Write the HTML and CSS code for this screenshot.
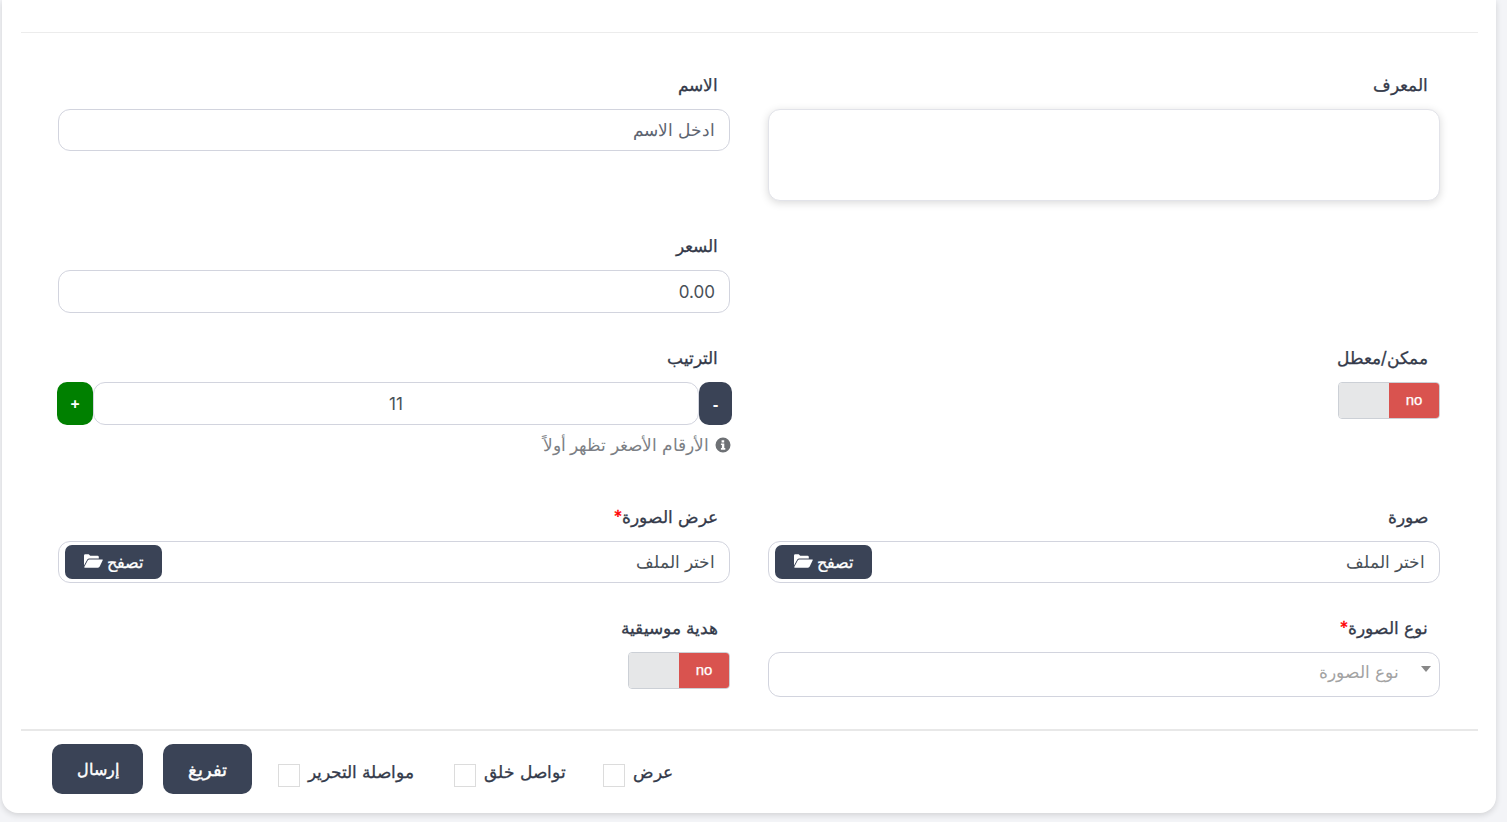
FILE: index.html
```html
<!DOCTYPE html>
<html lang="ar" dir="rtl">
<head>
<meta charset="utf-8">
<title>نموذج</title>
<link rel="stylesheet" href="styles.css">
</head>
<body>
<main class="card">
  <hr class="top-rule">
  <form class="form">
    <div class="grid">
      <div class="field row-1">
        <label class="label">المعرف</label>
        <textarea class="control textarea"></textarea>
      </div>
      <div class="field row-1">
        <label class="label">الاسم</label>
        <input class="control" type="text" placeholder="ادخل الاسم">
      </div>

      <div class="field row-2"></div>
      <div class="field row-2">
        <label class="label">السعر</label>
        <input class="control control-tall" type="text" value="0.00">
      </div>

      <div class="field row-3">
        <label class="label">ممكن/معطل</label>
        <div class="toggle"><span class="toggle-no">no</span><span class="toggle-off"></span></div>
      </div>
      <div class="field row-3">
        <label class="label">الترتيب</label>
        <div class="stepper">
          <button type="button" class="step step-minus">-</button>
          <input class="control control-tall step-input" type="text" value="11">
          <button type="button" class="step step-plus">+</button>
        </div>
        <p class="help">
          <svg class="info" viewBox="0 0 16 16"><path fill-rule="evenodd" d="M8 .5a7.5 7.5 0 1 0 0 15 7.5 7.5 0 0 0 0-15zM6.6 3.2h2.600v2.200H6.600zM5.900 6.500h3.400v4.600h1v1.600H5.900v-1.600h1V8.100h-1z"/></svg>
          الأرقام الأصغر تظهر أولاً
        </p>
      </div>

      <div class="field row-4">
        <label class="label label-tight">صورة</label>
        <div class="file"><span class="file-text">اختر الملف</span>
          <button type="button" class="browse">تصفح
            <svg class="folder" viewBox="0 0 19 14"><path d="M0 11.500V1.500Q0 .2 1.300 .2h3.400L6.200 1.700h7.300q1.300 0 1.300 1.300v1.400H5.200q-1.200 0-1.900 1.100z"/><path d="M5.300 5.400H18.300q.8 0 .4 .9l-3 6.300q-.5 1.100-1.700 1.100H.8q-.8 0-.4-.9l3.300-6.300q.6-1.100 1.600-1.100z"/></svg>
          </button>
        </div>
      </div>
      <div class="field row-4">
        <label class="label label-tight">عرض الصورة<span class="req">*</span></label>
        <div class="file"><span class="file-text">اختر الملف</span>
          <button type="button" class="browse">تصفح
            <svg class="folder" viewBox="0 0 19 14"><path d="M0 11.500V1.500Q0 .2 1.300 .2h3.400L6.200 1.700h7.300q1.300 0 1.300 1.300v1.400H5.200q-1.200 0-1.900 1.100z"/><path d="M5.300 5.400H18.300q.8 0 .4 .9l-3 6.300q-.5 1.100-1.700 1.100H.8q-.8 0-.4-.9l3.300-6.300q.6-1.100 1.600-1.100z"/></svg>
          </button>
        </div>
      </div>

      <div class="field row-5">
        <label class="label">نوع الصورة<span class="req">*</span></label>
        <div class="select"><span class="caret"></span><span class="select-text">نوع الصورة</span></div>
      </div>
      <div class="field row-5">
        <label class="label">هدية موسيقية</label>
        <div class="toggle"><span class="toggle-no">no</span><span class="toggle-off"></span></div>
      </div>
    </div>
  </form>
  <hr class="bottom-rule">
  <div class="actions">
    <label class="check check-first"><span>عرض</span><input type="checkbox"></label>
    <label class="check check-middle"><span>تواصل خلق</span><input type="checkbox"></label>
    <label class="check check-last"><span>مواصلة التحرير</span><input type="checkbox"></label>
    <button type="button" class="btn btn-reset">تفريغ</button>
    <button type="button" class="btn btn-send">إرسال</button>
  </div>
</main>
</body>
</html>
```
FILE: styles.css
```css
* { box-sizing: border-box; }
html, body { height: 100%; }
body {
  margin: 0;
  background: #f3f4f7;
  overflow: hidden;
  font-family: Inter, "Noto Sans", sans-serif;
  font-size: 17px;
  color: #343a4a;
}
.card {
  width: 1494px;
  height: 813px;
  margin-left: 2px;
  margin-right: 11px;
  padding: 32px 18px 0 19px;
  background: #fff;
  border-radius: 0 0 16px 16px;
  box-shadow: 0 2px 6px rgba(0, 0, 0, .14);
}
.top-rule { margin: 0; border: 0; border-top: 1px solid #ececec; }
.form { padding: 39px 19px 0 18px; height: 696px; }
.grid { display: grid; grid-template-columns: 710px 710px; }
.field { padding: 0 19px; }
.row-1 { height: 161px; }
.row-2 { height: 112px; }
.row-3 { height: 160px; }
.row-4 { height: 110px; }
.row-5 { height: 80px; }
.label {
  display: block;
  height: 24px;
  margin: 0 12px 13px 12px;
  font-size: 17px;
  line-height: 26px;
  color: #343a4a;
  -webkit-text-stroke: .3px #343a4a;
}
.label-tight { margin-bottom: 12px; line-height: 24px; }
.req { color: #f00; -webkit-text-stroke: .3px #f00; }
.control {
  display: block;
  width: 100%;
  height: 42px;
  padding: 0 14px;
  border: 1px solid #d2d4de;
  border-radius: 12px;
  background: #fff;
  font: inherit;
  color: #495057;
  outline: 0;
  text-align: right;
}
.control::placeholder { color: #5d6470; opacity: 1; }
.control-tall { height: 43px; }
.textarea {
  height: 92px;
  resize: none;
  border-color: #e2e3e9;
  box-shadow: 0 2px 8px rgba(0, 0, 0, .15);
}
.toggle {
  display: flex;
  width: 102px;
  height: 37px;
  border: 1px solid #ccd0d6;
  border-radius: 4px;
  overflow: hidden;
}
.toggle-no {
  flex: 1;
  background: #d9534f;
  color: #fff;
  font-family: "Liberation Sans", sans-serif;
  font-size: 15px;
  line-height: 34px;
  text-align: center;
  -webkit-text-stroke: .25px #fff;
}
.toggle-off { flex: 1; background: #e6e7e8; }
.stepper { display: flex; margin: 0 -2px 0 -1px; }
.step {
  width: 33px;
  height: 43px;
  padding: 0;
  border: 0;
  border-radius: 10px;
  background: #3a4356;
  color: #fff;
  font: 700 16px "Noto Sans", sans-serif;
}
.step-plus { width: 36px; background: #008000; }
.step-input { flex: 1; width: auto; text-align: center; }
.help {
  display: flex;
  align-items: center;
  gap: 6px;
  height: 24px;
  margin: 8px -1px 0 0;
  font-size: 17px;
  line-height: 24px;
  color: #7c7f85;
}
.info { width: 16px; height: 16px; fill: #6e7175; }
.file {
  display: flex;
  align-items: center;
  justify-content: space-between;
  height: 42px;
  padding: 0 14px 0 6px;
  border: 1px solid #d2d4de;
  border-radius: 12px;
  color: #495057;
}
.browse {
  display: flex;
  align-items: center;
  justify-content: center;
  gap: 4px;
  width: 97px;
  height: 34px;
  padding: 0;
  border: 0;
  border-radius: 7px;
  background: #3a4356;
  color: #fff;
  font: 400 16px Inter, "Noto Sans", sans-serif;
  -webkit-text-stroke: .3px #fff;
}
.folder { width: 19px; height: 14px; margin-top: -2px; fill: #fff; stroke: none; }
.select {
  display: flex;
  height: 45px;
  padding: 9px 8px 0 0;
  border: 1px solid #d2d4de;
  border-radius: 12px;
  color: #a3a3a3;
}
.caret {
  width: 0;
  height: 0;
  margin: 4px 0 0 22px;
  border-style: solid;
  border-width: 6px 5.500px 0;
  border-color: #888 transparent transparent;
}
.bottom-rule { margin: 0; border: 0; border-top: 2px solid #e8e8e8; }
.actions {
  display: flex;
  flex-direction: row;
  justify-content: flex-end;
  align-items: center;
  height: 50px;
  margin-top: 13px;
  padding-left: 31px;
}
.check {
  display: flex;
  align-items: center;
  gap: 8px;
  margin: 6px 0 0 38px;
  color: #343a4a;
  -webkit-text-stroke: .3px #343a4a;
}
.check input {
  appearance: none;
  width: 22px;
  height: 23px;
  margin: 6px 0 0;
  border: 1px solid #dcdcdc;
  background: #fff;
}
.check-first { margin-left: 37px; }
.check-middle { margin-left: 40px; }
.check-last { margin-left: 26px; }
.btn {
  height: 50px;
  padding: 0;
  border: 0;
  border-radius: 10px;
  background: #3a4356;
  color: #fff;
  font: 400 18px Inter, "Noto Sans", sans-serif;
  -webkit-text-stroke: .4px #fff;
}
.btn-reset { width: 89px; margin-left: 20px; }
.btn-send { width: 91px; font-size: 16px; }
```
